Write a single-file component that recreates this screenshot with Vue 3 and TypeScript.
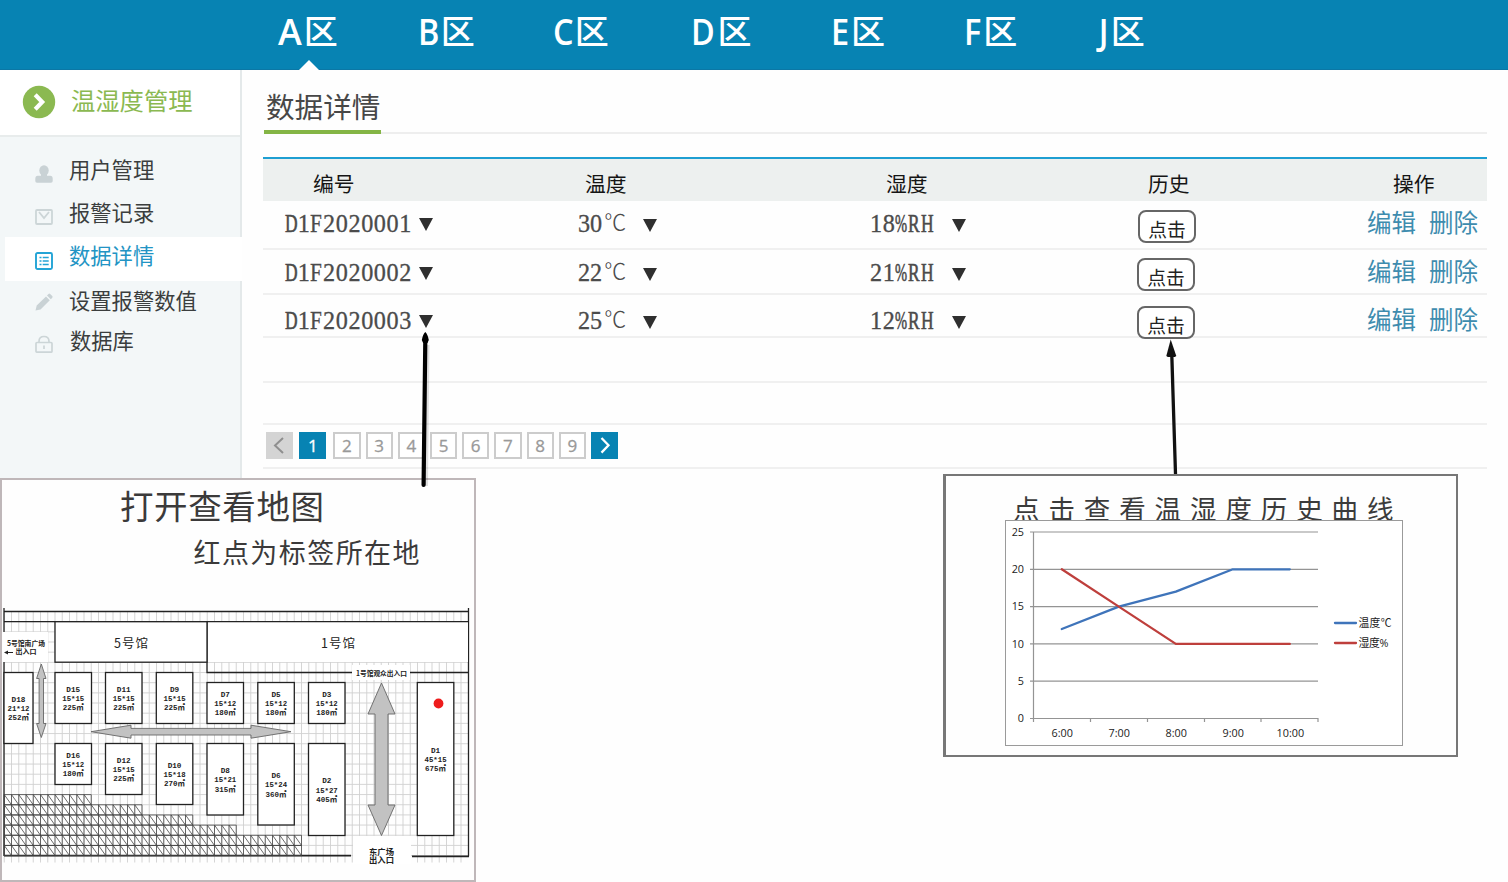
<script setup lang="ts">
interface Zone { letter: string; active?: boolean }
interface Booth { id: string; size: string; area: string; x: number; y: number; w: number; h: number }

const zones: Zone[] = [
  { letter: 'A', active: true }, { letter: 'B' }, { letter: 'C' }, { letter: 'D' },
  { letter: 'E' }, { letter: 'F' }, { letter: 'J' },
]

const menu = [
  { key: 'user', label: '用户管理' },
  { key: 'mail', label: '报警记录' },
  { key: 'list', label: '数据详情' },
  { key: 'pencil', label: '设置报警数值' },
  { key: 'lock', label: '数据库' },
]

const columns = ['编号', '温度', '湿度', '历史', '操作']
const rows = [
  { id: 'D1F2020001', temp: '30', hum: '18%RH' },
  { id: 'D1F2020002', temp: '22', hum: '21%RH' },
  { id: 'D1F2020003', temp: '25', hum: '12%RH' },
]
const pages = [1, 2, 3, 4, 5, 6, 7, 8, 9]

// Wide glyphs are condensed to the digit width so that values line up in equal cells
const glyphKind = (ch: string) => (ch === '%' ? 'pct' : /[A-Z]/.test(ch) ? 'cap cap-' + ch : 'dig')

// Floor plan grid
const GX = 7.25
const GY = 10.17
const gridX = Array.from({ length: 65 }, (_, i) => 4.25 + i * GX).filter(x => x < 468)
const gridY = Array.from({ length: 25 }, (_, i) => 133.5 + i * GY)

const booths: Booth[] = [
  { id: 'D18', size: '21*12', area: '252㎡', x: 4, y: 194.5, w: 29, h: 71 },
  { id: 'D15', size: '15*15', area: '225㎡', x: 55, y: 194.5, w: 36.5, h: 51 },
  { id: 'D11', size: '15*15', area: '225㎡', x: 105.5, y: 194.5, w: 36.5, h: 51 },
  { id: 'D9', size: '15*15', area: '225㎡', x: 156.3, y: 194.5, w: 36.5, h: 51 },
  { id: 'D7', size: '15*12', area: '180㎡', x: 207, y: 204.5, w: 36.5, h: 41 },
  { id: 'D5', size: '15*12', area: '180㎡', x: 257.8, y: 204.5, w: 36.5, h: 41 },
  { id: 'D3', size: '15*12', area: '180㎡', x: 308.5, y: 204.5, w: 36.5, h: 41 },
  { id: 'D16', size: '15*12', area: '180㎡', x: 55, y: 265.5, w: 36.5, h: 41 },
  { id: 'D12', size: '15*15', area: '225㎡', x: 105.5, y: 265.5, w: 36.5, h: 51 },
  { id: 'D10', size: '15*18', area: '270㎡', x: 156.3, y: 265.5, w: 36.5, h: 61 },
  { id: 'D8', size: '15*21', area: '315㎡', x: 207, y: 265.5, w: 36.5, h: 71.5 },
  { id: 'D6', size: '15*24', area: '360㎡', x: 257.8, y: 265.5, w: 36.5, h: 81.5 },
  { id: 'D2', size: '15*27', area: '405㎡', x: 308.5, y: 265.5, w: 36.5, h: 92 },
  { id: 'D1', size: '45*15', area: '675㎡', x: 417.3, y: 204.5, w: 36.5, h: 153 },
]

// Number of hatched cells in each row, top to bottom
const steps = [12, 19, 26, 32, 41, 41]
const hatch = steps.map((n, r) => {
  const y = 316.6 + r * GY
  let d = `M4.25 ${y}h${n * GX}v${GY}h${-n * GX}z`
  for (let i = 0; i < n; i++) {
    const x = 4.25 + i * GX
    d += `M${x} ${y}v${GY}M${x} ${y}l${GX} ${GY}`
  }
  return d
}).join('')

// History chart
const levels = [25, 20, 15, 10, 5, 0]
const levelY = (v: number) => 198.5 - v * 7.46
const times = ['6:00', '7:00', '8:00', '9:00', '10:00']
const timeX = (i: number) => 56.8 + i * 57
const toLine = (v: number[]) => v.map((n, i) => `${timeX(i)},${levelY(n)}`).join(' ')
const tempLine = toLine([12, 15, 17, 20, 20])
const humLine = toLine([20, 15, 10, 10, 10])
</script>

<template>
  <div class="page">
    <header class="top">
      <nav class="zones">
        <a v-for="z in zones" :key="z.letter" class="zone" :class="['z' + z.letter, { active: z.active }]">
          <span class="latin">{{ z.letter }}</span><span class="qu">区</span>
        </a>
      </nav>
    </header>

    <div class="body">
      <aside class="side">
        <div class="brand">
          <svg width="34" height="34" viewBox="0 0 34 34">
            <circle cx="17" cy="17" r="16.2" fill="#8bb951" />
            <path d="M13.2 9.8l7 7.2-7 7.2" fill="none" stroke="#fff" stroke-width="4.2" />
          </svg>
          <span>温湿度管理</span>
        </div>
        <ul class="menu">
          <li v-for="m in menu" :key="m.key" :class="['item', m.key]">
            <svg class="ico" width="18" height="18" viewBox="0 0 18 18">
              <g v-if="m.key === 'user'" fill="#c9d2d5">
                <ellipse cx="9" cy="5.5" rx="4.700" ry="5.300" />
                <path d="M6 8.500h6v2.300h3.200q2.500 0 2.500 3v2.200q0 1.700-1.700 1.700H2q-1.700 0-1.700-1.700v-2.200q0-3 2.500-3H6z" />
              </g>
              <g v-else-if="m.key === 'mail'" fill="none" stroke="#ccd5d7" stroke-width="1.800">
                <rect x="1" y="2" width="16" height="14" rx="1" />
                <path d="M4 4l5 6 5-6" />
              </g>
              <g v-else-if="m.key === 'list'" stroke="#23a4d6" fill="none">
                <rect x="1" y="1" width="16" height="16" rx="1.500" stroke-width="1.900" />
                <path d="M4.500 5.500h2M7.700 5.500h6M4.500 9h2M7.700 9h6M4.500 12.500h2M7.700 12.500h6" stroke-width="1.700" />
              </g>
              <g v-else-if="m.key === 'pencil'" fill="#c9d2d5">
                <path d="M.5 17.500l1.200-5L11 3.400l3.800 3.800-9.300 9.200zM12 2.400l1.500-1.500q.8-.6 1.600 0l2.200 2.200q.6.800 0 1.600l-1.500 1.500z" />
              </g>
              <g v-else fill="none" stroke="#ccd5d7" stroke-width="1.700">
                <rect x="1" y="7.500" width="16" height="9.700" rx="1" />
                <path d="M4 7.500V6.500q0-5 5-5t5 5v1M9 10.500v3.500" />
              </g>
            </svg>
            <span>{{ m.label }}</span>
          </li>
        </ul>
      </aside>

      <main class="main">
        <h1 class="title"><span>数据详情</span></h1>
        <section class="table">
          <div class="line head">
            <div v-for="(c, i) in columns" :key="c" :class="['cell', 'h' + i]">{{ c }}</div>
          </div>
          <div v-for="(r, i) in rows" :key="r.id" :class="['line', 'row', 'r' + i]">
            <div class="cell c0"><span class="num"><span v-for="(ch, k) in r.id" :key="k" :class="glyphKind(ch)">{{ ch }}</span></span><i class="tri"></i></div>
            <div class="cell c1"><span class="num">{{ r.temp }}<b class="deg">℃</b></span><i class="tri"></i></div>
            <div class="cell c2"><span class="num"><span v-for="(ch, k) in r.hum" :key="k" :class="glyphKind(ch)">{{ ch }}</span></span><i class="tri"></i></div>
            <div class="cell c3"><button class="btn">点击</button></div>
            <div class="cell c4"><a>编辑</a><a>删除</a></div>
          </div>
          <div class="line row blank"></div>
          <div class="line row blank short"></div>
          <div class="line row pager">
            <span class="pg prev"><svg width="27" height="27"><path d="M17 6l-8 7.500 8 7.500" fill="none" stroke="#8f8f8f" stroke-width="2" /></svg></span>
            <span v-for="p in pages" :key="p" class="pg" :class="{ on: p === 1 }">{{ p }}</span>
            <span class="pg next"><svg width="27" height="27"><path d="M10.500 6l7 7.300-7 7.300" fill="none" stroke="#fff" stroke-width="2.300" /></svg></span>
          </div>
        </section>
      </main>
    </div>

    <section class="map-panel">
      <svg width="476" height="404" viewBox="0 0 476 404">
        <g class="song" fill="#3b3a3a">
          <text x="120" y="41" font-size="33.500" textLength="204">打开查看地图</text>
          <text x="193.500" y="84.500" font-size="27" textLength="226">红点为标签所在地</text>
        </g>
        <g stroke="#d0d0d0" stroke-width="0.900">
          <line v-for="x in gridX" :key="'x' + x" :x1="x" :x2="x" y1="133.500" y2="384.500" />
          <line v-for="y in gridY" :key="'y' + y" x1="4" x2="468" :y1="y" :y2="y" />
        </g>
        <path d="M3 154h45v30H3zM352 187h58v15h-58zM353 358h58v28h-58z" fill="#fff" />
        <g stroke="#222" fill="none" stroke-width="1.300">
          <path d="M4 133.500h464.500M4 130v24M4 184v194M468.500 130v248.300" />
          <path d="M4 377.600h347M412 378.300h57" stroke-width="1.700" />
          <path d="M207 144h261v40H207z" fill="#fff" stroke="none" />
          <path d="M4 143.700h464.500M207 144v50.500h145M410 194.500h58" />
          <rect x="55" y="143.700" width="152" height="40.500" fill="#fff" />
        </g>
        <path :d="hatch" fill="none" stroke="#444" stroke-width="0.800" />
        <g fill="#c2c2c2" stroke="#666" stroke-width="0.900">
          <path d="M41.300 186l4.700 14.500h-2.500v45H46L41.300 259.500l-4.700-14h2.500v-45h-2.500z" />
          <path d="M91 253.700l40-6.500v3.200h120v-3.200l40 6.500-40 6.500v-3.200H131v3.200z" />
          <path d="M381.500 205l13.500 31h-7v91h7l-13.500 30.500L368 327h7v-91h-7z" />
        </g>
        <g v-for="b in booths" :key="b.id">
          <rect :x="b.x" :y="b.y" :width="b.w" :height="b.h" fill="#fff" stroke="#222" stroke-width="1.300" />
          <g class="booth">
            <text :x="b.x + b.w / 2" :y="b.y + b.h / 2 - 6.100">{{ b.id }}</text>
            <text :x="b.x + b.w / 2" :y="b.y + b.h / 2 + 3.100" textLength="22" lengthAdjust="spacingAndGlyphs">{{ b.size }}</text>
            <text :x="b.x + b.w / 2" :y="b.y + b.h / 2 + 12.300" textLength="21" lengthAdjust="spacingAndGlyphs">{{ b.area }}</text>
          </g>
        </g>
        <circle cx="438.500" cy="225.500" r="4.900" fill="#ee1c1c" />
        <g class="song" fill="#222" font-size="12.500">
          <text x="114" y="169.500" textLength="34">5号馆</text>
          <text x="321" y="169.500" textLength="34">1号馆</text>
        </g>
        <g class="mini">
          <text x="7" y="167.500" font-size="7" textLength="38" lengthAdjust="spacingAndGlyphs">5号馆南广场</text>
          <text x="15.500" y="175.500" font-size="7" textLength="21">出入口</text>
          <path d="M13 174.500H6" stroke="#222" /><path d="M4 174.500l4-2v4z" />
          <text x="356" y="197.500" font-size="6.800" textLength="51" lengthAdjust="spacingAndGlyphs">1号馆观众出入口</text>
          <text x="369" y="376.500" font-size="8.300" textLength="25">东广场</text>
          <text x="369" y="385" font-size="8.300" textLength="25">出入口</text>
        </g>
      </svg>
    </section>

    <section class="chart-panel">
      <h2>点击查看温湿度历史曲线</h2>
      <svg class="chart" width="398" height="226" viewBox="0 0 398 226">
        <rect x="0.500" y="0.500" width="397" height="225" fill="#fff" stroke="#9a9a9a" />
        <g stroke="#949494" stroke-width="1.200">
          <line v-for="v in levels" :key="v" x1="25" x2="313" :y1="levelY(v)" :y2="levelY(v)" />
          <path d="M28.500 12v190M85.500 198v4M142.500 198v4M199.500 198v4M256 198v4M313 198v4" />
        </g>
        <g class="axis">
          <text v-for="v in levels" :key="'l' + v" x="19" :y="levelY(v) + 3.700" text-anchor="end">{{ v }}</text>
          <text v-for="(t, i) in times" :key="t" :x="timeX(i) + 0.500" y="216.500" text-anchor="middle">{{ t }}</text>
          <text x="353.500" y="106.500" textLength="33">温度℃</text>
          <text x="353.500" y="126.500" textLength="30">湿度%</text>
        </g>
        <g fill="none" stroke-width="2.300" stroke-linecap="round" stroke-linejoin="round">
          <polyline :points="tempLine" stroke="#3f74ba" />
          <polyline :points="humLine" stroke="#be3f3c" />
          <path d="M330 103h21" stroke="#3f74ba" /><path d="M330 123h21" stroke="#be3f3c" />
        </g>
      </svg>
    </section>

    <svg class="pointers" width="1508" height="882" viewBox="0 0 1508 882">
      <path d="M427.500 345L426 486" stroke="#000" stroke-opacity=".12" stroke-width="4" fill="none" />
      <path d="M425.300 340L423.600 485" stroke="#000" stroke-width="4.200" stroke-linecap="round" fill="none" />
      <path d="M425.300 332q2.300 2 3.500 8l-1.300 3h-4.400l-1.300-3q1.200-6 3.500-8z" />
      <path d="M1171.700 352L1175.500 474" stroke="#111" stroke-width="3.300" fill="none" />
      <path d="M1170.700 339.500l5.600 16.500-1.500 1h-7l-1.500-1z" fill="#111" />
    </svg>
  </div>
</template>

<style>
html, body { margin: 0; background: #fff; }
</style>

<style scoped>
.page { position: relative; width: 1508px; height: 882px; overflow: hidden; background: #fefefe; font-family: "Noto Sans CJK SC", sans-serif; }
.top { box-sizing: border-box; height: 70px; background: #0783b3; border-bottom: 1px solid #0b77a5; }
.zones { display: grid; grid-template-columns: 140px 135px 138px 140px 133px 132px 60px; height: 70px; padding-left: 278px; }
.zone { position: relative; display: flex; align-items: flex-start; color: #fff; }
.latin { font: 600 36px/63px "Open Sans", sans-serif; transform: scaleX(.9); transform-origin: left; margin-right: -1px; }
.zA .latin { transform: none; margin-right: 2px; }
.zD .latin, .zE .latin, .zF .latin { margin-right: 0; }
.zJ .latin { padding-left: 3px; margin-right: 1px; }
.qu { font-size: 34px; line-height: 60px; font-weight: 500; }
.zone.active::after { content: ""; position: absolute; left: 21px; top: 60px; border: 10px solid transparent; border-top: 0; border-bottom-color: #fff; }
.body { display: flex; height: 410px; }
.side { box-sizing: border-box; width: 242px; border-right: 2px solid #e4e9ea; background: #f3f7f8; }
.brand { box-sizing: border-box; display: flex; align-items: center; height: 67px; padding: 0 0 2px 22px; gap: 15px; background: #fff; border-bottom: 2px solid #e8ecec; color: #8bb951; font-size: 24.300px; }
.brand span { line-height: 30px; margin-top: -4px; }
.menu { margin: 0; padding: 13px 0 0; list-style: none; }
.item { display: flex; align-items: center; box-sizing: border-box; height: 43px; padding-left: 35px; gap: 16px; font-size: 21.300px; line-height: 30px; color: #3b3e3e; }
.item span { margin-top: -7px; }
.ico { margin-top: 3px; }
.item.user { height: 44px; }
.item.list { margin: 0 -2px 0 5px; padding-left: 30px; background: #fff; color: #2394c4; height: 44px; }
.item.list span { margin-top: -9px; }
.item.pencil { height: 42px; }
.item.pencil span { margin-top: -4px; }
.item.pencil .ico { margin-top: -1px; }
.item.lock span { margin: -9px 0 0 1px; }
.item.lock .ico { margin-top: -1px; }
.main { flex: 1; padding: 0 21px 0 21px; }
.title { box-sizing: border-box; margin: 0 0 23px 1px; height: 64px; border-bottom: 2px solid #eee; font-weight: 400; font-size: 28.600px; line-height: 30px; color: #474747; }
.title span { display: inline-block; box-sizing: border-box; height: 64px; padding: 21px 1px 0 2px; border-bottom: 4px solid #84b545; }
.table { width: 1224px; }
.line { display: grid; grid-template-columns: 300px 300px 260px 230px 134px; box-sizing: border-box; }
.head { height: 44px; border-top: 2px solid #1e9fd2; background: #edf0ef; color: #151515; font-size: 20.800px; line-height: 48px; }
.h0 { padding-left: 50px; } .h1 { padding-left: 22px; } .h2 { padding-left: 23px; } .h3 { padding-left: 25px; } .h4 { padding-left: 40px; }
.row { height: 45px; border-bottom: 2px solid #f0f0f0; }
.row .cell { display: flex; align-items: center; white-space: nowrap; height: 46px; }
.r0 { height: 49px; }
.r2 { height: 43px; }
.r2 .cell { margin-top: 3px; }
.num { font-family: "Liberation Serif", "Noto Sans CJK SC", serif; font-size: 24.200px; line-height: 30px; color: #4b4b4b; -webkit-text-stroke: .3px #4b4b4b; display: flex; flex: none; }
.dig, .cap, .pct { display: block; width: 12.700px; }
.cap, .pct { transform-origin: left; }
.cap-D, .cap-R, .cap-H { transform: scaleX(.72); -webkit-text-stroke-width: .6px; }
.cap-F { transform: scaleX(.88); }
.pct { transform: scaleX(.6); -webkit-text-stroke-width: .6px; }
.deg { font-weight: 300; font-size: 22px; margin-left: 2px; -webkit-text-stroke: 0; position: relative; top: -1px; }
.tri { border: 7.500px solid transparent; border-top: 13px solid #2f2f2f; border-bottom: 0; }
.c0 { padding-left: 22px; } .c0 .tri { margin-left: 7px; }
.c1 { padding-left: 15px; } .c1 .num { min-width: 65px; } .c1 .tri { margin-top: 3px; }
.c2 { padding-left: 7px; } .c2 .tri { margin: 3px 0 0 19px; }
.row .c3 { padding: 3px 0 0 14px; box-sizing: border-box; }
.r0 .c3 { padding: 5px 0 0 15px; }
.btn { box-sizing: border-box; width: 58px; height: 33px; padding: 3px 0 0; border: 2px solid #666; border-radius: 8px; background: #fff; color: #222; font: 18.800px/25px "Noto Sans CJK SC", sans-serif; flex: none; }
.c4 { padding-left: 14px; gap: 13px; color: #3e8cae; font-size: 24.500px; line-height: 30px; }
.c4 a { margin-top: -4px; }
.blank.short { height: 42px; }
.pager { display: flex; align-items: center; height: 44px; padding: 0 0 2px 3px; gap: 5px; }
.pg { box-sizing: border-box; width: 27.200px; height: 27px; border: 2px solid #ccc; background: #fff; color: #999; font: 500 17px/23px "Open Sans", sans-serif; text-align: center; -webkit-text-stroke: .3px currentColor; }
.pg svg { display: block; margin: -2px; }
.pg.on { background: #0783b3; border-color: #0783b3; color: #fff; margin: 0 2px 0 1px; }
.pg.prev { background: #d4d4d4; border-color: #d4d4d4; }
.pg.next { background: #0783b3; border-color: #0783b3; }
.map-panel { position: absolute; left: 0; top: 478px; width: 476px; height: 404px; background: #fefefe; box-shadow: inset 0 0 0 2px #bfb7b9; }
.map-panel svg, .chart { display: block; }
.song { font-family: "Noto Sans CJK SC", sans-serif; }
.booth { font: bold 7.700px "Liberation Mono", "Noto Sans CJK SC", monospace; text-anchor: middle; fill: #222; }
.mini { font-family: "Noto Sans CJK SC", sans-serif; font-weight: 700; fill: #222; }
.chart-panel { position: absolute; left: 943px; top: 474px; box-sizing: border-box; width: 515px; height: 283px; border: 2px solid #777; border-left-width: 3px; background: #fefefe; }
.chart-panel h2 { margin: 0; height: 44px; padding-left: 67px; white-space: nowrap; font-weight: 400; font-size: 26.500px; line-height: 63px; letter-spacing: 8.900px; color: #3b3b3b; }
.chart { position: relative; margin-left: 59px; }
.axis { font: 10.800px "Open Sans", "Noto Sans CJK SC", sans-serif; fill: #222; }
.pointers { position: absolute; left: 0; top: 0; pointer-events: none; }
</style>
